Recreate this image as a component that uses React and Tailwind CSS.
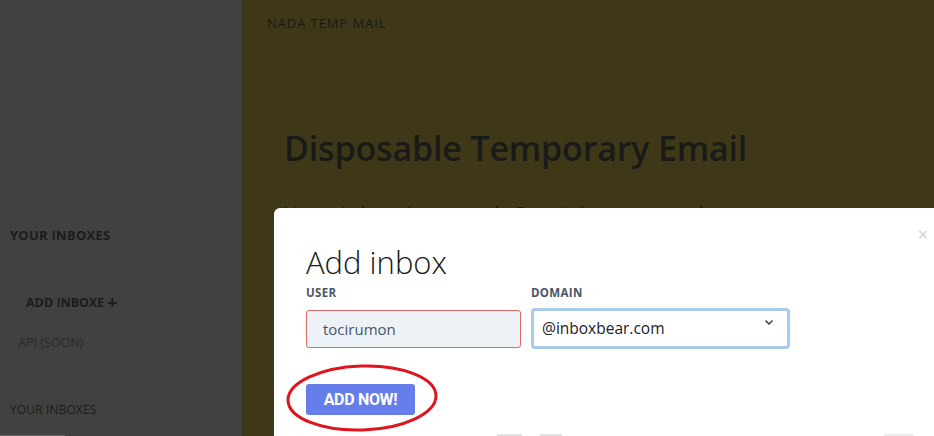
import React from 'react';

const SANS = "font-['Open_Sans','Noto_Sans',sans-serif]";

function Sidebar() {
  return (
    <aside className={`w-[242px] shrink-0 bg-[#414141] text-[#1c1c1c] ${SANS} flex flex-col`}>
      <div className="h-[227px]" />
      <h3 className="pl-[10px] text-[13px] font-bold tracking-[0.02em] leading-4">YOUR INBOXES</h3>
      <button className="mt-[51px] ml-[26px] flex items-center gap-[3px] text-[12.5px] font-bold leading-4 text-left">
        ADD INBOXE
        <span className="text-[17px] font-bold leading-none">+</span>
      </button>
      <div className="mt-[24px] ml-[18px] text-[12.5px] leading-4 text-[#2b2b2b]">API (SOON)</div>
      <h3 className="mt-[51px] pl-[10px] text-[12px] leading-4 tracking-[0.01em]">YOUR INBOXES</h3>
      <div className="mt-auto h-px w-[65px] bg-[#6a6a6a]" />
    </aside>
  );
}

function Main() {
  return (
    <main className={`flex-1 bg-[#3e3819] text-[#1a1a17] ${SANS} overflow-hidden`}>
      <div className="pt-[15px] pl-[25px] text-[13px] tracking-[0.07em] leading-4">NADA TEMP MAIL</div>
      <div className="pl-[42px] pt-[97px]">
        <h1 className="text-[34px] font-semibold leading-10 tracking-[-0.005em]">Disposable Temporary Email</h1>
        <p className="mt-[31px] text-[23px] leading-8">Your inbox is sacred. Our inboxes are throwaway.</p>
      </div>
    </main>
  );
}

function AddInboxModal() {
  return (
    <div className={`absolute left-[274px] top-[208px] right-0 bottom-0 bg-white rounded-tl-[6px] ${SANS}`}>
      <button className="absolute right-[6px] top-[17px] text-[18px] leading-none text-[#b0b8c4] font-light">×</button>
      <div className="pl-8 pt-[36px]">
        <h2 className="text-[31px] font-light leading-9 text-[#1a1a1a]">Add inbox</h2>
        <div className="mt-[5px] flex gap-[10px]">
          <label className="flex flex-col w-[215px]">
            <span className="text-[11.5px] font-bold tracking-[0.03em] text-[#4a5568] leading-4">USER</span>
            <input
              readOnly
              value="tocirumon"
              className="mt-[9px] h-[38px] rounded-[3px] border border-[#e06a6a] bg-[#edf2f7] px-[16px] text-[15px] text-[#4a5568] outline-none"
            />
          </label>
          <label className="flex flex-col w-[259px]">
            <span className="text-[11.5px] font-bold tracking-[0.03em] text-[#4a5568] leading-4">DOMAIN</span>
            <div className="mt-[7px] relative h-[41px] rounded-[4px] border-[3px] border-[#a9cbea] bg-white flex items-center pl-[8px] text-[15.5px] text-[#1a202c]">
              @inboxbear.com
              <svg className="absolute right-[13px] top-[8px]" width="10" height="7" viewBox="0 0 10 7" fill="none">
                <path d="M1.5 1.5 L5 5 L8.5 1.5" stroke="#333" strokeWidth="1.4" />
              </svg>
            </div>
          </label>
        </div>
        <div className="mt-[35px] relative w-fit">
          <button className="h-[31px] w-[109px] rounded-[3px] bg-[#667eea] text-white text-[16px] font-bold font-['Roboto',sans-serif] tracking-[-0.02em]">
            ADD NOW!
          </button>
          <svg className="absolute left-[-21px] top-[-20px] pointer-events-none" width="156" height="72" viewBox="0 0 156 72" fill="none">
            <ellipse cx="77" cy="34" rx="74" ry="32" stroke="#e0141e" strokeWidth="3" transform="rotate(-2 77 34)" />
          </svg>
        </div>
      </div>
      <div className="absolute bottom-0 left-[223px] h-[2px] w-[25px] bg-[#e2e2e2]" />
      <div className="absolute bottom-0 left-[266px] h-[2px] w-[22px] bg-[#e2e2e2]" />
      <div className="absolute bottom-0 left-[610px] h-[2px] w-[30px] bg-[#ececec]" />
    </div>
  );
}

export default function App() {
  return (
    <div className="relative flex h-[436px] w-full overflow-hidden">
      <Sidebar />
      <Main />
      <AddInboxModal />
    </div>
  );
}
